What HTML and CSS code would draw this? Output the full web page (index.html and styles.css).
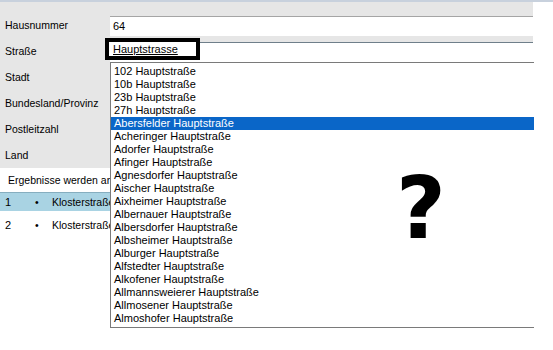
FILE: index.html
```html
<!DOCTYPE html>
<html lang="de">
<head>
    <meta charset="UTF-8">
    <title>Adresssuche</title>
    <link rel="stylesheet" href="styles.css">
</head>
<body>
    <div class="window">
        <div class="title-strip"></div>

        <!-- Adressformular -->
        <div class="form-panel">
            <div class="form-row">
                <span class="label">Hausnummer</span>
                <div class="textbox">64</div>
            </div>
            <div class="form-row">
                <span class="label">Straße</span>
                <div class="textbox focused"></div>
            </div>
            <div class="form-row">
                <span class="label">Stadt</span>
                <div class="textbox"></div>
            </div>
            <div class="form-row">
                <span class="label">Bundesland/Provinz</span>
                <div class="textbox"></div>
            </div>
            <div class="form-row">
                <span class="label">Postleitzahl</span>
                <div class="textbox"></div>
            </div>
            <div class="form-row">
                <span class="label">Land</span>
                <div class="textbox"></div>
            </div>
        </div>

        <!-- Ergebnisse (rechter Teil liegt unter der Vorschlagsliste) -->
        <div class="results">
            <p class="results-info">Ergebnisse werden angezeigt</p>
            <div class="result-row selected">
                <span class="col-nr">1</span>
                <span class="col-dot">•</span>
                <span class="col-street">Klosterstraße</span>
            </div>
            <div class="result-row">
                <span class="col-nr">2</span>
                <span class="col-dot">•</span>
                <span class="col-street">Klosterstraße</span>
            </div>
        </div>

        <!-- Markierung der Eingabe -->
        <div class="highlight-box"><span>Hauptstrasse</span></div>

        <!-- Vorschlagsliste -->
        <ul class="suggest-list">
            <li>102 Hauptstraße</li>
            <li>10b Hauptstraße</li>
            <li>23b Hauptstraße</li>
            <li>27h Hauptstraße</li>
            <li class="active">Abersfelder Hauptstraße</li>
            <li>Acheringer Hauptstraße</li>
            <li>Adorfer Hauptstraße</li>
            <li>Afinger Hauptstraße</li>
            <li>Agnesdorfer Hauptstraße</li>
            <li>Aischer Hauptstraße</li>
            <li>Aixheimer Hauptstraße</li>
            <li>Albernauer Hauptstraße</li>
            <li>Albersdorfer Hauptstraße</li>
            <li>Albsheimer Hauptstraße</li>
            <li>Alburger Hauptstraße</li>
            <li>Alfstedter Hauptstraße</li>
            <li>Alkofener Hauptstraße</li>
            <li>Allmannsweierer Hauptstraße</li>
            <li>Allmosener Hauptstraße</li>
            <li>Almoshofer Hauptstraße</li>
        </ul>

        <div class="question">?</div>
    </div>
</body>
</html>
```

FILE: styles.css
```css
body {
    margin: 0;
    font-family: "Liberation Sans", Arial, sans-serif;
    font-size: 10.5px;
    color: #000;
    background: #fff;
}

.window {
    position: relative;
    width: 553px;
    height: 350px;
    overflow: hidden;
}

.title-strip {
    height: 2px;
    background-color: #c8d1dd;
}

.form-panel {
    width: 533px;
    padding-top: 10px;
    background-color: #e6e6e6;
}

.form-row {
    display: flex;
    height: 26px;
}

.label {
    width: 105px;
    padding-left: 5px;
    line-height: 26px;
}

.textbox {
    flex: 1;
    height: 19px;
    margin-top: 4px;
    padding-left: 3px;
    line-height: 19px;
    background-color: #fff;
    border-top: 1px solid #a5a5a5;
    font-size: 11px;
}

.textbox.focused {
    border-top: 1px solid #6f7f8a;
    border-bottom: 1px solid #9aa7b0;
}

.results {
    width: 110px;
    overflow: hidden;
    white-space: nowrap;
}

.results-info {
    margin: 0;
    height: 24px;
    padding-left: 8px;
    line-height: 24px;
}

.result-row {
    display: flex;
    height: 19px;
    margin-bottom: 5px;
    line-height: 19px;
}

.result-row.selected {
    background-color: #a9d3e3;
    border-top: 1px solid #86aebf;
    height: 18px;
}

.col-nr {
    flex: none;
    width: 30px;
    padding-left: 5px;
    font-size: 11px;
}

.col-dot {
    flex: none;
    width: 17px;
}

.highlight-box {
    position: absolute;
    left: 105px;
    top: 38px;
    width: 87px;
    height: 14px;
    border: 4px solid #000;
    background-color: #fff;
    z-index: 2;
}

.highlight-box span {
    display: block;
    padding-left: 4px;
    font-size: 11px;
    line-height: 14px;
    text-decoration: underline;
}

.suggest-list {
    position: absolute;
    left: 110px;
    top: 62px;
    width: 423px;
    height: 262px;
    margin: 0;
    padding: 2px 0 0 0;
    list-style: none;
    background-color: #fff;
    border: 1px solid #7a7a7a;
    border-right: none;
    font-size: 11px;
}

.suggest-list li {
    height: 13px;
    padding-left: 3px;
    line-height: 13px;
}

.suggest-list li.active {
    background-color: #0a66c8;
    color: #fff;
}

.question {
    position: absolute;
    left: 396px;
    top: 164px;
    font-family: "DejaVu Sans", sans-serif;
    font-weight: bold;
    font-size: 86px;
    line-height: 88px;
}
```
